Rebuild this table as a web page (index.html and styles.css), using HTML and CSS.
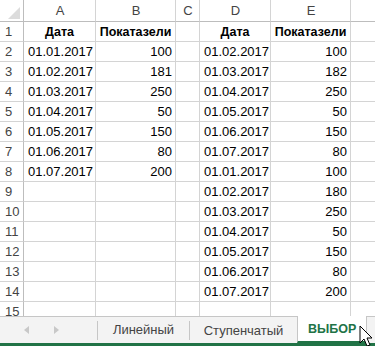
FILE: index.html
```html
<!DOCTYPE html>
<html>
<head>
<meta charset="utf-8">
<link rel="stylesheet" href="styles.css">
</head>
<body>
<div class="app">
  <div class="sheet">
    <div class="grid">
      <div class="c corner"><svg class="tri" width="14" height="14" viewBox="0 0 14 14"><polygon points="13,1 13,13 1,13" fill="#dcdcdc"/></svg></div>
      <div class="c ch">A</div><div class="c ch">B</div><div class="c ch">C</div><div class="c ch">D</div><div class="c ch">E</div><div class="c ch last"></div>

      <div class="c rh">1</div><div class="c b ctr">Дата</div><div class="c b ctr">Покатазели</div><div class="c"></div><div class="c b ctr">Дата</div><div class="c b ctr">Покатазели</div><div class="c last"></div>
      <div class="c rh">2</div><div class="c">01.01.2017</div><div class="c r">100</div><div class="c"></div><div class="c">01.02.2017</div><div class="c r">100</div><div class="c last"></div>
      <div class="c rh">3</div><div class="c">01.02.2017</div><div class="c r">181</div><div class="c"></div><div class="c">01.03.2017</div><div class="c r">182</div><div class="c last"></div>
      <div class="c rh">4</div><div class="c">01.03.2017</div><div class="c r">250</div><div class="c"></div><div class="c">01.04.2017</div><div class="c r">250</div><div class="c last"></div>
      <div class="c rh">5</div><div class="c">01.04.2017</div><div class="c r">50</div><div class="c"></div><div class="c">01.05.2017</div><div class="c r">50</div><div class="c last"></div>
      <div class="c rh">6</div><div class="c">01.05.2017</div><div class="c r">150</div><div class="c"></div><div class="c">01.06.2017</div><div class="c r">150</div><div class="c last"></div>
      <div class="c rh">7</div><div class="c">01.06.2017</div><div class="c r">80</div><div class="c"></div><div class="c">01.07.2017</div><div class="c r">80</div><div class="c last"></div>
      <div class="c rh">8</div><div class="c">01.07.2017</div><div class="c r">200</div><div class="c"></div><div class="c">01.01.2017</div><div class="c r">100</div><div class="c last"></div>
      <div class="c rh">9</div><div class="c"></div><div class="c"></div><div class="c"></div><div class="c">01.02.2017</div><div class="c r">180</div><div class="c last"></div>
      <div class="c rh">10</div><div class="c"></div><div class="c"></div><div class="c"></div><div class="c">01.03.2017</div><div class="c r">250</div><div class="c last"></div>
      <div class="c rh">11</div><div class="c"></div><div class="c"></div><div class="c"></div><div class="c">01.04.2017</div><div class="c r">50</div><div class="c last"></div>
      <div class="c rh">12</div><div class="c"></div><div class="c"></div><div class="c"></div><div class="c">01.05.2017</div><div class="c r">150</div><div class="c last"></div>
      <div class="c rh">13</div><div class="c"></div><div class="c"></div><div class="c"></div><div class="c">01.06.2017</div><div class="c r">80</div><div class="c last"></div>
      <div class="c rh">14</div><div class="c"></div><div class="c"></div><div class="c"></div><div class="c">01.07.2017</div><div class="c r">200</div><div class="c last"></div>
      <div class="c rh">15</div><div class="c"></div><div class="c"></div><div class="c"></div><div class="c"></div><div class="c"></div><div class="c last"></div>
    </div>
  </div>
  <div class="tabbar">
    <div class="nav">
      <svg width="6" height="8" viewBox="0 0 6 8"><polygon points="5,0 5,8 0,4" fill="#c8c8c8"/></svg>
      <svg width="6" height="8" viewBox="0 0 6 8"><polygon points="1,0 1,8 6,4" fill="#c8c8c8"/></svg>
    </div>
    <div class="tab t1">Линейный</div>
    <div class="tab t2">Ступенчатый</div>
    <div class="tab active">ВЫБОР</div>
    <svg class="cursor" width="14" height="22" viewBox="0 0 14 22"><path d="M1 1 L1 18 L5 14 L8 21 L11 20 L8 13 L13 13 Z" fill="#fff" stroke="#000" stroke-width="1" stroke-linejoin="round"/></svg>
  </div>
  <div class="status"></div>
</div>
</body>
</html>
```
FILE: styles.css
```css
* { box-sizing: border-box; }
html, body { margin: 0; padding: 0; background: #fff; }
.app { width: 375px; height: 346px; overflow: hidden; font-family: "Liberation Sans", Arial, sans-serif; }
.sheet { height: 316px; overflow: hidden; }
.grid {
  display: grid;
  grid-template-columns: 24px 72px 80px 24px 71px 80px 1fr;
  grid-template-rows: 22px repeat(15, 20px);
}
.c {
  border-right: 1px solid #d4d4d4;
  border-bottom: 1px solid #d4d4d4;
  font-size: 13px;
  color: #000;
  display: flex;
  align-items: center;
  padding: 0 3px 0 4px;
  white-space: nowrap;
}
.c.last { border-right: none; }
.c.b { font-weight: bold; font-size: 12.5px; }
.c.ctr { justify-content: center; padding: 0; }
.c.r { justify-content: flex-end; }
.ch { justify-content: center; color: #444; border-bottom-color: #bdbdbd; }
.corner { border-right-color: #bdbdbd; border-bottom-color: #bdbdbd; align-items: flex-end; justify-content: flex-end; padding: 0 2px 1px 0; }
.tri { display: block; }
.rh { color: #444; border-right-color: #bdbdbd; padding-left: 5px; }
.tabbar {
  height: 27px;
  border-top: 1px solid #c6c6c6;
  background: #f3f3f3;
  display: flex;
  position: relative;
}
.nav { width: 98px; display: flex; align-items: center; gap: 23px; padding-left: 24px; padding-bottom: 2px; border-right: 1px solid #c6c6c6; margin: 4px 0 3px; }
.tab { display: flex; align-items: center; justify-content: center; font-size: 13px; color: #444; padding-bottom: 1px; }
.t1 { width: 91px; }
.t2 { width: 108px; border-left: 1px solid #c6c6c6; margin: 4px 0 3px; }
.active {
  width: 70px;
  margin-top: -1px;
  background: #fff;
  border-left: 1px solid #c6c6c6;
  border-right: 1px solid #c6c6c6;
  border-bottom: 2px solid #217346;
  color: #217346;
  font-weight: bold;
  font-size: 12.5px;
  justify-content: flex-start;
  padding: 0 0 0 10px;
}
.cursor { position: absolute; left: 359px; top: 8px; }
.status { height: 3px; background: #217346; }
```
